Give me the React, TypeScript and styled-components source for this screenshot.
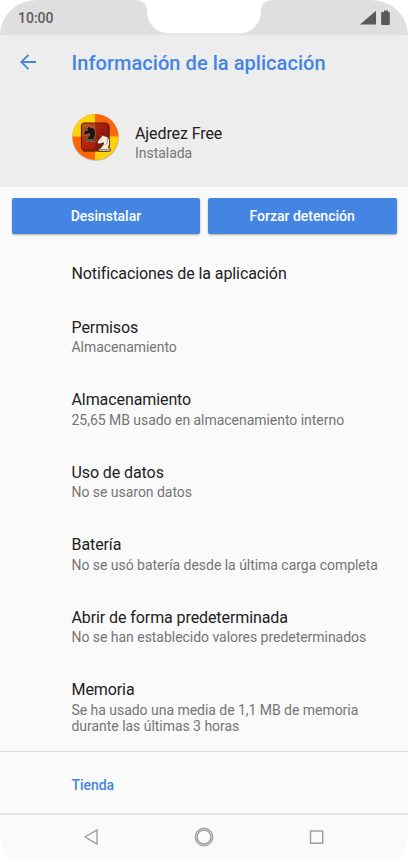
import React from "react";
import styled, { createGlobalStyle } from "styled-components";

const GlobalStyle = createGlobalStyle`
  * { box-sizing: border-box; }
  body { margin: 0; background: #fff; font-family: Roboto, "Liberation Sans", sans-serif; }
`;

const Screen = styled.main`
  width: 408px;
  height: 861px;
  display: flex;
  flex-direction: column;
  overflow: hidden;
  background: #fafafa;
  border-radius: 37px 37px 26px 26px / 35px 35px 25px 25px;
`;

const StatusBar = styled.header`
  position: relative;
  flex: none;
  height: 35px;
  display: flex;
  align-items: center;
  justify-content: space-between;
  padding: 0 18.5px 0 18px;
  background: #dfdfdf;
`;

const Notch = styled.svg`
  position: absolute;
  left: 134px;
  top: 0;
`;

const Clock = styled.span`
  font-size: 14px;
  font-weight: 500;
  line-height: 16px;
  color: #5c5c5c;
`;

const StatusIcons = styled.svg`
  display: block;
`;

const Header = styled.section`
  flex: none;
  height: 151.5px;
  background: #ededed;
`;

const TitleBar = styled.div`
  display: flex;
  align-items: center;
  height: 56px;
  padding-left: 20px;
`;

const BackIcon = styled.svg`
  flex: none;
  margin: 0 35.5px 2px 0;
`;

const Title = styled.h1`
  margin: 0 0 1px;
  font-size: 20px;
  font-weight: 500;
  line-height: 24px;
  letter-spacing: 0.05px;
  color: #4485e3;
`;

const AppSummary = styled.div`
  display: flex;
  align-items: center;
  padding: 22px 0 0 71px;
  gap: 15px;
`;

const AppText = styled.div`
  padding-top: 9.8px;
`;

const Name = styled.h2`
  margin: 0;
  font-size: 16px;
  font-weight: 400;
  line-height: 21px;
  letter-spacing: -0.09px;
  color: #222;
`;

const Detail = styled.p`
  margin: 1.5px 0 0;
  font-size: 14px;
  line-height: 16.5px;
  letter-spacing: -0.035px;
  color: #757575;
  white-space: pre-line;
`;

const Actions = styled.div`
  flex: none;
  display: grid;
  grid-template-columns: 1fr 1fr;
  gap: 7.5px;
  padding: 11.5px 11.5px 0;
`;

const Action = styled.button`
  height: 36px;
  padding: 0;
  border: 0;
  border-radius: 2px;
  background: #4485e3;
  box-shadow: 0 1px 2px rgba(0, 0, 0, 0.32);
  color: #fff;
  font: 500 14px/16px Roboto, "Liberation Sans", sans-serif;
  letter-spacing: -0.02px;
`;

const Settings = styled.div`
  flex: none;
  padding: 19.5px 0 0 71.5px;
  height: 517px;
`;

const Setting = styled.section<{ $height?: number }>`
  height: ${(p) => p.$height ?? 72.5}px;
  padding-top: 9.5px;
`;

const Store = styled.section`
  flex: 1;
  display: flex;
  align-items: center;
  padding: 5px 0 0 71.5px;
  border-top: 1px solid #dadada;
  color: #4485e3;
  font-size: 14px;
  font-weight: 500;
  letter-spacing: -0.04px;
`;

const NavBar = styled.nav`
  flex: none;
  height: 48px;
  display: flex;
  align-items: center;
  justify-content: center;
  gap: 92px;
  padding-bottom: 2px;
  border-top: 2px solid #e7e7e7;
`;

const items: { name: string; detail?: string; height?: number }[] = [
  { name: "Notificaciones de la aplicación", height: 53.5 },
  { name: "Permisos", detail: "Almacenamiento" },
  { name: "Almacenamiento", detail: "25,65 MB usado en almacenamiento interno" },
  { name: "Uso de datos", detail: "No se usaron datos" },
  { name: "Batería", detail: "No se usó batería desde la última carga completa" },
  { name: "Abrir de forma predeterminada", detail: "No se han establecido valores predeterminados" },
  { name: "Memoria", detail: "Se ha usado una media de 1,1 MB de memoria\ndurante las últimas 3 horas" },
];

function ChessIcon() {
  const knight =
    "M2 17H14V14.5L12 13.5C12.5 11 14 9 13 5.5C12 2.5 9.5 1.5 7.2 1.7L6 0L5 2.3C3.2 3.3 2 5.5 .4 8L1.3 10L3.6 9.6L7 8.6C7 11.4 4.6 12 4.5 13.5L2 14.5Z";
  return (
    <svg width="49" height="49" viewBox="0 0 49 49">
      <defs>
        <clipPath id="disc"><circle cx="24.5" cy="24" r="23" /></clipPath>
        <linearGradient id="board" x1="0" y1="0" x2="1" y2="1">
          <stop offset="0" stopColor="#a64a22" />
          <stop offset=".5" stopColor="#a01c0d" />
          <stop offset="1" stopColor="#6f1409" />
        </linearGradient>
      </defs>
      <circle cx="24.5" cy="24.7" r="23.4" fill="#000" opacity=".17" />
      <g clipPath="url(#disc)">
        <rect width="49" height="49" fill="#fc6508" />
        <path d="M0 0H24V23.5H0ZM24 23.5H49V49H24Z" fill="#ffd307" />
      </g>
      <rect x="11" y="11" width="28" height="28" rx="3" fill="#4b1507" opacity=".6" />
      <rect x="10.4" y="10" width="27" height="27" rx="2.5" fill="url(#board)" stroke="#5e1a08" />
      <path d="M11 10.5H24V23.5H11Z" fill="#c9602c" opacity=".45" />
      <path d="M11 23.5H24V36.5H11Z" fill="#c42a08" opacity=".5" />
      <path d={knight} transform="translate(12 12.6) scale(.94)" fill="#1d1815" stroke="#d99a68" strokeWidth=".5" />
      <path d="M15.5 17.5l1.5-1M15 27h9" stroke="#e0b48c" strokeWidth=".8" />
      <path d={knight} transform="translate(25.8 21.2) scale(.97 1)" fill="#f5edd8" stroke="#4b2517" strokeWidth=".9" />
      <path d="M29.5 26h1M35.5 25c2 2 1 5-1 7M28.5 36.5h10" stroke="#8f745d" strokeWidth=".8" fill="none" />
    </svg>
  );
}

export default function App() {
  return (
    <>
      <GlobalStyle />
      <Screen>
        <StatusBar>
          <Clock>10:00</Clock>
          <Notch width="140" height="35" viewBox="0 0 140 35">
            <path d="M0 0C9 0 13 4 13 12C13 24 22 34 36 34H104C118 34 127 24 127 12C127 4 131 0 140 0Z" fill="#e9e9e9" />
            <path d="M3 0C10 1 13 5 13 11C13 23 22 33 36 33H104C118 33 127 23 127 11C127 5 130 1 137 0Z" fill="#fff" />
          </Notch>
          <StatusIcons width="30" height="16" viewBox="0 0 30 16">
            <path d="M0 14.5L16 .7V14.5Z" fill="#595959" />
            <path d="M22 2h2V.6h4V2h1q.8 0 .8.8V14.2q0 .8-.8.8h-7q-.8 0-.8-.8V2.8q0-.8.8-.8Z" fill="#595959" />
          </StatusIcons>
        </StatusBar>
        <Header>
          <TitleBar>
            <BackIcon width="16" height="16" viewBox="0 0 16 16" fill="none" stroke="#4485e3" strokeWidth="1.8">
              <path d="M8.5 .8L1.3 8l7.2 7.2M1.5 8H16" />
            </BackIcon>
            <Title>Información de la aplicación</Title>
          </TitleBar>
          <AppSummary>
            <ChessIcon />
            <AppText>
              <Name>Ajedrez Free</Name>
              <Detail>Instalada</Detail>
            </AppText>
          </AppSummary>
        </Header>
        <Actions>
          <Action>Desinstalar</Action>
          <Action>Forzar detención</Action>
        </Actions>
        <Settings>
          {items.map((item) => (
            <Setting key={item.name} $height={item.height}>
              <Name>{item.name}</Name>
              {item.detail && <Detail>{item.detail}</Detail>}
            </Setting>
          ))}
        </Settings>
        <Store>Tienda</Store>
        <NavBar>
          <svg width="20" height="20" viewBox="0 0 20 20" fill="none" stroke="#9b9b9b" strokeWidth="1.3">
            <path d="M3 10L15 3V17Z" />
          </svg>
          <svg width="20" height="20" viewBox="0 0 20 20" fill="none">
            <circle cx="10" cy="10" r="8" stroke="#c9c9c9" strokeWidth="2.8" />
            <circle cx="10" cy="10" r="8.8" stroke="#9b9b9b" strokeWidth=".9" />
            <circle cx="10" cy="10" r="6.8" stroke="#9b9b9b" strokeWidth="1.1" />
          </svg>
          <svg width="20" height="20" viewBox="0 0 20 20" fill="none">
            <rect x="4.5" y="4" width="12.2" height="12.2" stroke="#9b9b9b" strokeWidth="1.4" />
          </svg>
        </NavBar>
      </Screen>
    </>
  );
}
